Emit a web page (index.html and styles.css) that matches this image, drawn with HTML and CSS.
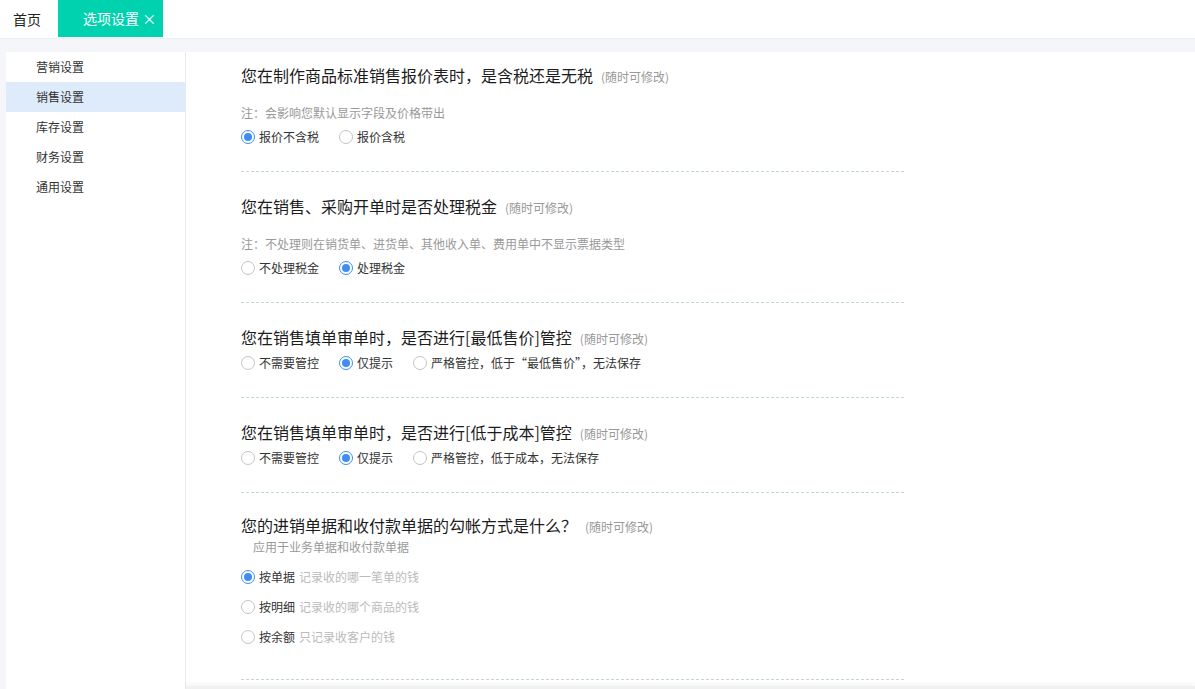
FILE: index.html
```html
<!DOCTYPE html>
<html>
    <head>
        <meta charset="utf-8" />
        <title>选项设置</title>
        <link rel="stylesheet" href="styles.css">
    </head>

    <body>
        <div id="tabs">
            <div class="tab">首页</div>
            <div class="tab actif">选项设置 <span class="fermer">×</span></div>
        </div>

        <div id="page">
            <div id="menu">
                <div class="item">营销设置</div>
                <div class="item actif">销售设置</div>
                <div class="item">库存设置</div>
                <div class="item">财务设置</div>
                <div class="item">通用设置</div>
            </div>

            <div id="contenu">

                <div class="section">
                    <div class="titre">您在制作商品标准销售报价表时，是含税还是无税<span class="modif">(随时可修改)</span></div>
                    <div class="note">注：会影响您默认显示字段及价格带出</div>
                    <div class="options">
                        <label class="radio"><span class="rond coche"></span>报价不含税</label>
                        <label class="radio"><span class="rond"></span>报价含税</label>
                    </div>
                </div>

                <div class="section">
                    <div class="titre">您在销售、采购开单时是否处理税金<span class="modif">(随时可修改)</span></div>
                    <div class="note">注：不处理则在销货单、进货单、其他收入单、费用单中不显示票据类型</div>
                    <div class="options">
                        <label class="radio"><span class="rond"></span>不处理税金</label>
                        <label class="radio"><span class="rond coche"></span>处理税金</label>
                    </div>
                </div>

                <div class="section">
                    <div class="titre">您在销售填单审单时，是否进行[最低售价]管控<span class="modif">(随时可修改)</span></div>
                    <div class="options">
                        <label class="radio"><span class="rond"></span>不需要管控</label>
                        <label class="radio"><span class="rond coche"></span>仅提示</label>
                        <label class="radio"><span class="rond"></span>严格管控，低于“最低售价”，无法保存</label>
                    </div>
                </div>

                <div class="section">
                    <div class="titre">您在销售填单审单时，是否进行[低于成本]管控<span class="modif">(随时可修改)</span></div>
                    <div class="options">
                        <label class="radio"><span class="rond"></span>不需要管控</label>
                        <label class="radio"><span class="rond coche"></span>仅提示</label>
                        <label class="radio"><span class="rond"></span>严格管控，低于成本，无法保存</label>
                    </div>
                </div>

                <div class="section dernier">
                    <div class="titre">您的进销单据和收付款单据的勾帐方式是什么？<span class="modif">(随时可修改)</span></div>
                    <div class="soustitre">应用于业务单据和收付款单据</div>
                    <div class="ligne"><label class="radio"><span class="rond coche"></span>按单据<span class="aide">记录收的哪一笔单的钱</span></label></div>
                    <div class="ligne"><label class="radio"><span class="rond"></span>按明细<span class="aide">记录收的哪个商品的钱</span></label></div>
                    <div class="ligne"><label class="radio"><span class="rond"></span>按余额<span class="aide">只记录收客户的钱</span></label></div>
                </div>

            </div>
        </div>

        <div id="basbar"></div>
    </body>
</html>
```

FILE: styles.css
```css
body{
    margin: 0;
    background-color: #f5f6fa;
    font-family: "Noto Sans CJK SC", "Noto Sans", sans-serif;
    color: #333;
    overflow: hidden;
    height: 689px;
}
#tabs{
    display: flex;
    height: 38px;
    background-color: white;
    border-bottom: 1px solid #ebedf2;
}
.tab{
    font-size: 14px;
    line-height: 38px;
    padding: 0 17px 0 13px;
    color: #222;
}
.tab.actif{
    background-color: #00d2b0;
    color: white;
    padding: 0 7px 0 25px;
    height: 37px;
    line-height: 37px;
}
.fermer{
    font-size: 14px;
}
#page{
    display: flex;
    margin-top: 13px;
    padding-left: 6px;
    height: 640px;
}
#menu{
    width: 179px;
    background-color: white;
    border-right: 1px solid #e8e9ec;
}
.item{
    height: 30px;
    line-height: 30px;
    padding-left: 30px;
    font-size: 12px;
    color: #333;
}
.item.actif{
    background-color: #ddebfa;
}
#contenu{
    flex: 1;
    background-color: white;
    padding: 11px 0 0 55px;
}
.section{
    width: 663px;
    padding-bottom: 24px;
    border-bottom: 1px dashed #bfd8d5;
    margin-bottom: 22px;
}
.section.dernier{
    margin-top: -2px;
    padding-bottom: 32px;
}
.titre{
    display: flex;
    align-items: baseline;
    font-size: 16px;
    height: 24px;
    line-height: 24px;
    color: #1c1c1c;
}
.modif{
    font-size: 12px;
    line-height: 12px;
    color: #999;
    margin-left: 8px;
}
.note{
    font-size: 12px;
    height: 20px;
    line-height: 20px;
    color: #999;
    margin-top: 16px;
}
.options{
    display: flex;
    height: 20px;
    margin-top: 4px;
}
.soustitre{
    font-size: 12px;
    height: 20px;
    line-height: 20px;
    color: #999;
    padding-left: 12px;
}
.ligne{
    height: 20px;
    margin-top: 10px;
}
.radio{
    display: flex;
    align-items: center;
    height: 20px;
    font-size: 12px;
    line-height: 20px;
    color: #333;
    margin-right: 20px;
}
.rond{
    width: 12px;
    height: 12px;
    border: 1px solid #c4c4c4;
    border-radius: 50%;
    margin-right: 4px;
    position: relative;
    background-color: white;
}
.rond.coche{
    border-color: #3d8ef0;
}
.rond.coche::after{
    content: "";
    position: absolute;
    left: 2px;
    top: 2px;
    width: 8px;
    height: 8px;
    border-radius: 50%;
    background-color: #3d8ef0;
}
.aide{
    color: #bbb;
    margin-left: 4px;
}
#basbar{
    position: fixed;
    left: 186px;
    right: 0;
    bottom: 0;
    height: 3px;
    background-color: #f0f0f0;
    box-shadow: 0 -2px 4px rgba(0,0,0,0.06);
}
```
